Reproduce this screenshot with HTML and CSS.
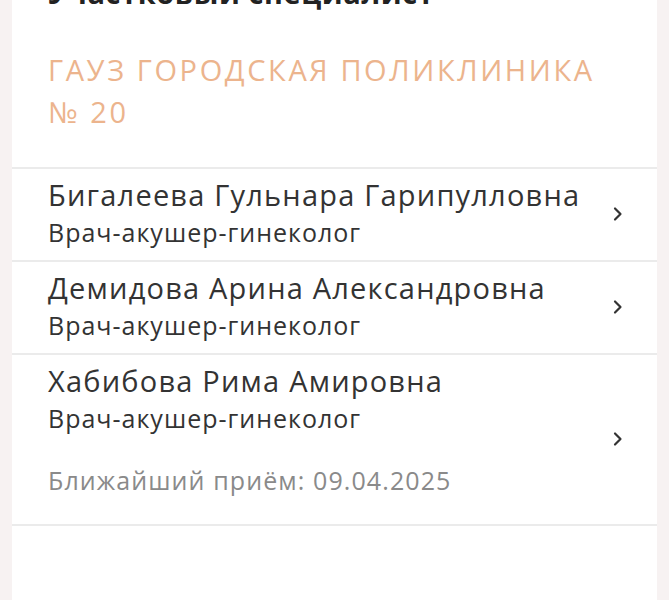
FILE: index.html
```html
<!DOCTYPE html>
<html lang="ru">
<head>
<meta charset="utf-8">
<link rel="stylesheet" href="styles.css">
</head>
<body>
<div class="card">
  <h2 class="title">Участковый специалист</h2>
  <div class="clinic">ГАУЗ ГОРОДСКАЯ ПОЛИКЛИНИКА<br>№ 20</div>
  <ul class="list">
    <li class="row">
      <div class="info">
        <div class="name">Бигалеева Гульнара Гарипулловна</div>
        <div class="role">Врач-акушер-гинеколог</div>
      </div>
      <svg class="chev" viewBox="0 0 12 16" width="12" height="16"><path d="M3 2.5 L8.5 8 L3 13.5" fill="none" stroke="#333" stroke-width="2.2" stroke-linecap="round" stroke-linejoin="round"/></svg>
    </li>
    <li class="row">
      <div class="info">
        <div class="name">Демидова Арина Александровна</div>
        <div class="role">Врач-акушер-гинеколог</div>
      </div>
      <svg class="chev" viewBox="0 0 12 16" width="12" height="16"><path d="M3 2.5 L8.5 8 L3 13.5" fill="none" stroke="#333" stroke-width="2.2" stroke-linecap="round" stroke-linejoin="round"/></svg>
    </li>
    <li class="row last">
      <div class="info">
        <div class="name">Хабибова Рима Амировна</div>
        <div class="role">Врач-акушер-гинеколог</div>
        <div class="next">Ближайший приём: 09.04.2025</div>
      </div>
      <svg class="chev" viewBox="0 0 12 16" width="12" height="16"><path d="M3 2.5 L8.5 8 L3 13.5" fill="none" stroke="#333" stroke-width="2.2" stroke-linecap="round" stroke-linejoin="round"/></svg>
    </li>
  </ul>
</div>
</body>
</html>
```

FILE: styles.css
```css
html, body {
  margin: 0;
  padding: 0;
  background: #f7f2f2;
  font-family: "Open Sans", sans-serif;
  overflow: hidden;
}
body {
  width: 645px;
  padding: 0 12px;
  height: 600px;
}
.card {
  background: #ffffff;
  min-height: 640px;
  margin-top: -25px;
}
.title {
  margin: 0;
  padding: 0 36px;
  font-size: 29px;
  line-height: 36px;
  font-weight: 700;
  letter-spacing: 0.6px;
  color: #222;
  white-space: nowrap;
}
.clinic {
  padding: 38px 36px 34px;
  font-size: 29px;
  line-height: 42px;
  font-weight: 400;
  letter-spacing: 2.6px;
  color: #ecb48d;
}
.list {
  list-style: none;
  margin: 0;
  padding: 0;
  border-top: 2px solid #ebebeb;
}
.row {
  display: flex;
  align-items: center;
  padding: 7px 33px 9px 36px;
  border-bottom: 2px solid #ebebeb;
}
.info {
  flex: 1;
}
.name {
  font-size: 29px;
  line-height: 38px;
  letter-spacing: 1.2px;
  color: #333;
}
.role {
  font-size: 25px;
  line-height: 37px;
  letter-spacing: 1px;
  color: #333;
}
.next {
  margin: 25px 0 16px;
  font-size: 25px;
  line-height: 37px;
  letter-spacing: 1.1px;
  color: #8a8a8a;
}
.chev {
  flex: none;
}
```
